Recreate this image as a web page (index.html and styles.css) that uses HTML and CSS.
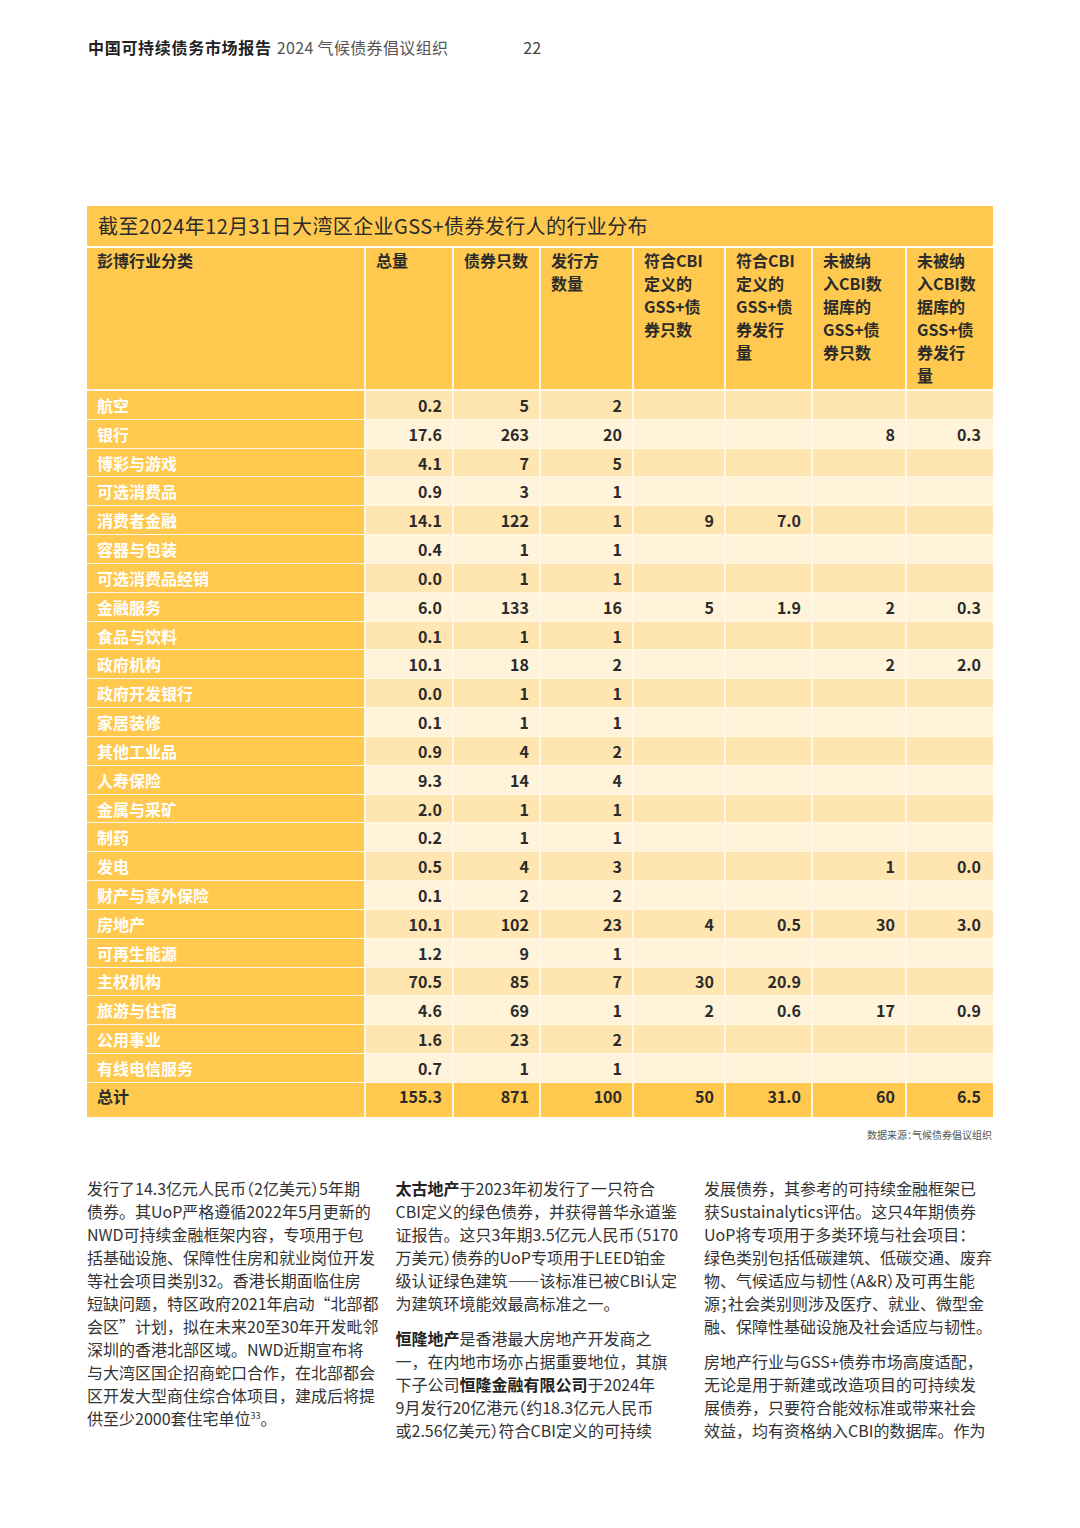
FILE: index.html
```html
<!DOCTYPE html>
<html lang="zh-CN">
<head>
<meta charset="utf-8">
<title>中国可持续债务市场报告 2024</title>
<link rel="stylesheet" href="styles.css">
</head>
<body>
<div class="page">
  <header class="running-head">
    <span class="rh-title">中国可持续债务市场报告</span>
    <span class="rh-sub">2024 气候债券倡议组织</span>
    <span class="rh-page">22</span>
  </header>

  <section class="chart">
    <div class="chart-title">截至2024年12月31日大湾区企业GSS+债券发行人的行业分布</div>
    <table class="data">
      <thead>
        <tr>
          <th class="c1">彭博行业分类</th>
          <th class="c2">总量</th>
          <th class="c3">债券只数</th>
          <th class="c4">发行方<br>数量</th>
          <th class="c5">符合CBI<br>定义的<br>GSS+债<br>券只数</th>
          <th class="c6">符合CBI<br>定义的<br>GSS+债<br>券发行<br>量</th>
          <th class="c7">未被纳<br>入CBI数<br>据库的<br>GSS+债<br>券只数</th>
          <th class="c8">未被纳<br>入CBI数<br>据库的<br>GSS+债<br>券发行<br>量</th>
        </tr>
      </thead>
      <tbody>
        <tr><th>航空</th><td>0.2</td><td>5</td><td>2</td><td></td><td></td><td></td><td></td></tr>
        <tr><th>银行</th><td>17.6</td><td>263</td><td>20</td><td></td><td></td><td>8</td><td>0.3</td></tr>
        <tr><th>博彩与游戏</th><td>4.1</td><td>7</td><td>5</td><td></td><td></td><td></td><td></td></tr>
        <tr><th>可选消费品</th><td>0.9</td><td>3</td><td>1</td><td></td><td></td><td></td><td></td></tr>
        <tr><th>消费者金融</th><td>14.1</td><td>122</td><td>1</td><td>9</td><td>7.0</td><td></td><td></td></tr>
        <tr><th>容器与包装</th><td>0.4</td><td>1</td><td>1</td><td></td><td></td><td></td><td></td></tr>
        <tr><th>可选消费品经销</th><td>0.0</td><td>1</td><td>1</td><td></td><td></td><td></td><td></td></tr>
        <tr><th>金融服务</th><td>6.0</td><td>133</td><td>16</td><td>5</td><td>1.9</td><td>2</td><td>0.3</td></tr>
        <tr><th>食品与饮料</th><td>0.1</td><td>1</td><td>1</td><td></td><td></td><td></td><td></td></tr>
        <tr><th>政府机构</th><td>10.1</td><td>18</td><td>2</td><td></td><td></td><td>2</td><td>2.0</td></tr>
        <tr><th>政府开发银行</th><td>0.0</td><td>1</td><td>1</td><td></td><td></td><td></td><td></td></tr>
        <tr><th>家居装修</th><td>0.1</td><td>1</td><td>1</td><td></td><td></td><td></td><td></td></tr>
        <tr><th>其他工业品</th><td>0.9</td><td>4</td><td>2</td><td></td><td></td><td></td><td></td></tr>
        <tr><th>人寿保险</th><td>9.3</td><td>14</td><td>4</td><td></td><td></td><td></td><td></td></tr>
        <tr><th>金属与采矿</th><td>2.0</td><td>1</td><td>1</td><td></td><td></td><td></td><td></td></tr>
        <tr><th>制药</th><td>0.2</td><td>1</td><td>1</td><td></td><td></td><td></td><td></td></tr>
        <tr><th>发电</th><td>0.5</td><td>4</td><td>3</td><td></td><td></td><td>1</td><td>0.0</td></tr>
        <tr><th>财产与意外保险</th><td>0.1</td><td>2</td><td>2</td><td></td><td></td><td></td><td></td></tr>
        <tr><th>房地产</th><td>10.1</td><td>102</td><td>23</td><td>4</td><td>0.5</td><td>30</td><td>3.0</td></tr>
        <tr><th>可再生能源</th><td>1.2</td><td>9</td><td>1</td><td></td><td></td><td></td><td></td></tr>
        <tr><th>主权机构</th><td>70.5</td><td>85</td><td>7</td><td>30</td><td>20.9</td><td></td><td></td></tr>
        <tr><th>旅游与住宿</th><td>4.6</td><td>69</td><td>1</td><td>2</td><td>0.6</td><td>17</td><td>0.9</td></tr>
        <tr><th>公用事业</th><td>1.6</td><td>23</td><td>2</td><td></td><td></td><td></td><td></td></tr>
        <tr><th>有线电信服务</th><td>0.7</td><td>1</td><td>1</td><td></td><td></td><td></td><td></td></tr>
      </tbody>
      <tfoot>
        <tr><th>总计</th><td>155.3</td><td>871</td><td>100</td><td>50</td><td>31.0</td><td>60</td><td>6.5</td></tr>
      </tfoot>
    </table>
    <p class="source">数据来源<span class="hw">：</span>气候债券倡议组织</p>
  </section>

  <section class="body-text">
    <div class="col">
      <p>发行了14.3亿元人民币<span class="hw">（</span>2亿美元<span class="hw">）</span>5年期<br>债券。其UoP严格遵循2022年5月更新的<br>NWD可持续金融框架内容，专项用于包<br>括基础设施、保障性住房和就业岗位开发<br>等社会项目类别32。香港长期面临住房<br>短缺问题，特区政府2021年启动“北部都<br>会区”计划，拟在未来20至30年开发毗邻<br>深圳的香港北部区域。NWD近期宣布将<br>与大湾区国企招商蛇口合作，在北部都会<br>区开发大型商住综合体项目，建成后将提<br>供至少2000套住宅单位<sup>33</sup>。</p>
    </div>
    <div class="col">
      <p><b>太古地产</b>于2023年初发行了一只符合<br>CBI定义的绿色债券，并获得普华永道鉴<br>证报告。这只3年期3.5亿元人民币<span class="hw">（</span>5170<br>万美元<span class="hw">）</span>债券的UoP专项用于LEED铂金<br>级认证绿色建筑——该标准已被CBI认定<br>为建筑环境能效最高标准之一。</p>
      <p><b>恒隆地产</b>是香港最大房地产开发商之<br>一，在内地市场亦占据重要地位，其旗<br>下子公司<b>恒隆金融有限公司</b>于2024年<br>9月发行20亿港元<span class="hw">（</span>约18.3亿元人民币<br>或2.56亿美元<span class="hw">）</span>符合CBI定义的可持续</p>
    </div>
    <div class="col">
      <p>发展债券，其参考的可持续金融框架已<br>获Sustainalytics评估。这只4年期债券<br>UoP将专项用于多类环境与社会项目：<br>绿色类别包括低碳建筑、低碳交通、废弃<br>物、气候适应与韧性<span class="hw">（</span>A&amp;R<span class="hw">）</span>及可再生能<br>源<span class="hw">；</span>社会类别则涉及医疗、就业、微型金<br>融、保障性基础设施及社会适应与韧性。</p>
      <p>房地产行业与GSS+债券市场高度适配，<br>无论是用于新建或改造项目的可持续发<br>展债券，只要符合能效标准或带来社会<br>效益，均有资格纳入CBI的数据库。作为</p>
    </div>
  </section>
</div>
</body>
</html>
```

FILE: styles.css
```css
* { box-sizing: border-box; }

html, body {
  margin: 0;
  padding: 0;
  background: #ffffff;
}

body {
  font-family: "Noto Sans CJK SC", "Noto Sans", sans-serif;
  color: #2b2b2b;
}

.page {
  width: 1080px;
  padding: 35px 0 0 87px;
}

.running-head {
  display: flex;
  align-items: baseline;
  font-size: 16px;
  line-height: 24px;
  padding-left: 1px;
}

.rh-title {
  font-weight: 700;
  color: #222222;
  letter-spacing: 0.7px;
}

.rh-sub {
  margin-left: 5px;
  color: #555555;
  letter-spacing: 0.35px;
}

.rh-page {
  margin-left: 75px;
  color: #444444;
}

.chart {
  width: 906px;
  margin-top: 147px;
}

.chart-title {
  height: 40px;
  background: #ffc94f;
  font-size: 20px;
  line-height: 40px;
  padding-left: 11px;
  color: #2b2b2b;
  letter-spacing: 0.4px;
  margin-bottom: 2px;
}

.data {
  width: 906px;
  border-collapse: separate;
  border-spacing: 0;
  table-layout: fixed;
  font-size: 16px;
}

.data th,
.data td {
  box-sizing: border-box;
  padding: 0 10px;
  border-right: 2px solid #fff8ea;
  border-bottom: 1px solid #fff8ea;
  line-height: 22px;
  font-weight: 700;
}

.data th:last-child,
.data td:last-child {
  border-right: none;
}

.data td:last-child {
  padding-right: 12px;
}

.data thead th {
  background: #ffc94f;
  color: #2b2b2b;
  text-align: left;
  vertical-align: top;
  height: 143px;
  padding-top: 1px;
  line-height: 23px;
  border-bottom-width: 2px;
}

.data .c1 { width: 279px; }
.data .c2 { width: 88px; }
.data .c3 { width: 87px; }
.data .c4 { width: 93px; }
.data .c5 { width: 92px; }
.data .c6 { width: 87px; }
.data .c7 { width: 94px; }
.data .c8 { width: 86px; }

.data tbody th {
  background: #ffc94f;
  color: #ffffff;
  text-align: left;
  height: 28.83px;
}

.data tbody td {
  text-align: right;
  color: #2b2b2b;
  height: 28.83px;
}

.data tbody tr:nth-child(odd) td { background: #ffe6b1; }
.data tbody tr:nth-child(even) td { background: #fff3d9; }

.data tfoot th,
.data tfoot td {
  background: #ffc94f;
  color: #2b2b2b;
  height: 34px;
  vertical-align: top;
  padding-top: 2px;
  border-bottom: none;
  line-height: 23px;
}

.data tfoot th { text-align: left; }
.data tfoot td { text-align: right; }

.source {
  margin: 11px 0 0;
  text-align: right;
  font-size: 10px;
  line-height: 14px;
  color: #555555;
  padding-right: 1px;
}

.hw {
  font-feature-settings: "halt";
}

.body-text {
  display: grid;
  grid-template-columns: repeat(3, 292px);
  column-gap: 16.5px;
  margin-top: 35px;
  font-size: 16px;
  line-height: 23px;
  color: #333333;
}

.col p {
  margin: 0 0 12px;
  white-space: nowrap;
}

.col b {
  font-weight: 700;
  color: #222222;
}

.col sup {
  font-size: 9px;
  line-height: 0;
  vertical-align: 6px;
}
```
